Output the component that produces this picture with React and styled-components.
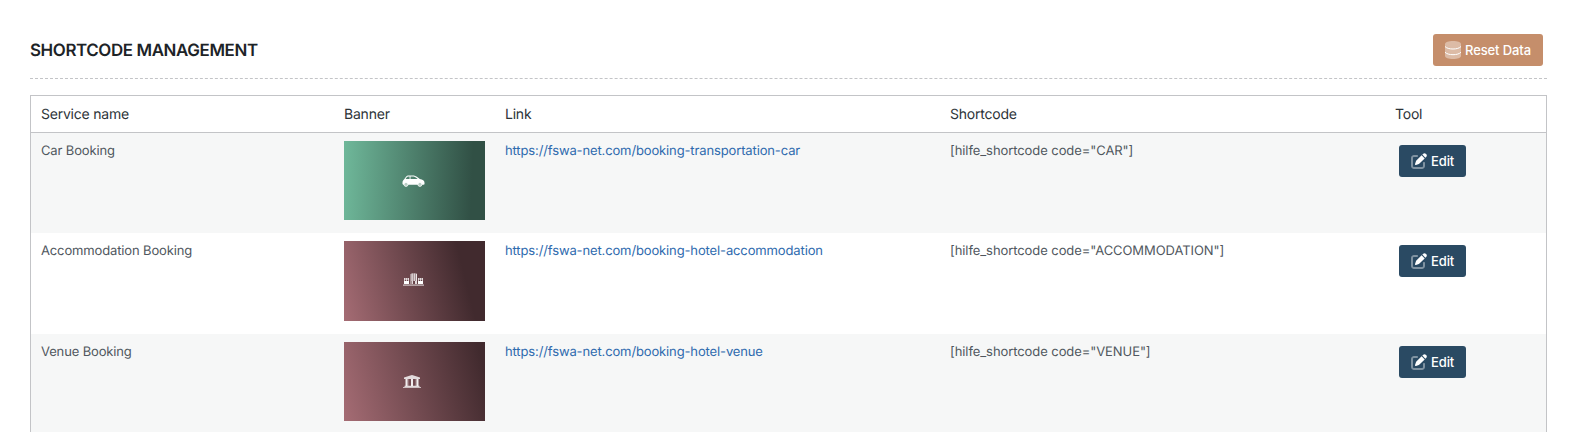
import React from 'react';
import styled, { createGlobalStyle } from 'styled-components';

const GlobalStyle = createGlobalStyle`
  * { box-sizing: border-box; }
  html { overflow: hidden; }
  body {
    margin: 0;
    background: #fff;
    color: #50575e;
    font: 13px/18px Inter, "Liberation Sans", sans-serif;
    text-rendering: geometricPrecision;
  }
`;

const Page = styled.main`
  height: 432px;
  overflow: hidden;
  padding: 21px 28px 0 30px;
`;

const Header = styled.header`
  display: flex;
  align-items: center;
  justify-content: space-between;
  height: 58px;
  padding: 0 4px 0 0;
  border-bottom: 1px dashed #c3c4c7;
`;

const Title = styled.h1`
  margin: 0;
  padding-top: 2px;
  color: #1d2327;
  font-size: 16.9px;
  font-weight: 600;
  line-height: 24px;
  letter-spacing: -0.38px;
  white-space: nowrap;
`;

const Button = styled.button`
  display: inline-flex;
  align-items: center;
  gap: 4px;
  width: ${(p) => (p.$tone === 'reset' ? 110 : 67)}px;
  height: 32px;
  padding: 0 0 0 12px;
  border: 0;
  border-radius: 3px;
  background: ${(p) => (p.$tone === 'reset' ? '#c58e6b' : '#2a4a63')};
  color: #fff;
  font: 500 13px/18px Inter, "Liberation Sans", sans-serif;
  letter-spacing: -0.1px;
  white-space: nowrap;
`;

const Table = styled.table`
  width: 1517px;
  margin-top: 16px;
  table-layout: fixed;
  border: 1px solid #c3c4c7;
  border-spacing: 0;
`;

const Col = styled.col`
  width: ${(p) => p.$width}px;
`;

const HeadCell = styled.th`
  height: 37px;
  padding: 2px 10px 0;
  border-bottom: 1px solid #c3c4c7;
  color: #2c3338;
  font-size: 14px;
  font-weight: 400;
  letter-spacing: -0.22px;
  text-align: left;
`;

const Row = styled.tr`
  height: ${(p) => p.$height}px;
  background: ${(p) => (p.$striped ? '#f6f7f7' : '#fff')};
`;

const Cell = styled.td`
  padding: 8px 10px;
  vertical-align: top;
  white-space: nowrap;
`;

const TextCell = styled(Cell)`
  padding-top: 9px;
  letter-spacing: ${(p) => p.$tracking}px;
`;

const ToolCell = styled(Cell)`
  padding: 12px 14px;
`;

const Link = styled.a`
  color: #2e6aae;
  text-decoration: none;
`;

const Banner = styled.div`
  display: flex;
  align-items: center;
  justify-content: center;
  width: 141px;
  height: ${(p) => p.$height}px;
  padding: 0 ${(p) => p.$shift}px ${(p) => p.$lift}px 0;
  background: ${(p) => p.$fill};
`;

const DatabaseIcon = () => (
  <svg width="16" height="18" viewBox="0 0 16 18">
    <path d="M0 3C0 1.3 3.6 0 8 0s8 1.3 8 3v12c0 1.7-3.6 3-8 3s-8-1.3-8-3z" fill="#fff" opacity=".4" />
    <path d="M0 5.5c1.500 1.700 4.500 2.500 8 2.500s6.500-.8 8-2.500M0 11.200c1.500 1.700 4.500 2.500 8 2.500s6.500-.8 8-2.500" fill="none" stroke="#fff" strokeWidth="1" />
  </svg>
);

const EditIcon = () => (
  <svg width="16" height="16" viewBox="0 0 512 512" fill="#fff">
    <path opacity=".4" d="M96 64C43 64 0 107 0 160V416c0 53 43 96 96 96H352c53 0 96-43 96-96V320c0-17.700-14.300-32-32-32s-32 14.300-32 32v96c0 17.700-14.300 32-32 32H96c-17.700 0-32-14.300-32-32V160c0-17.700 14.300-32 32-32h96c17.700 0 32-14.300 32-32s-14.300-32-32-32H96z" />
    <path d="M471.6 21.7c-21.9-21.9-57.3-21.9-79.2 0L362.3 51.7l97.9 97.9 30.1-30.1c21.9-21.9 21.9-57.3 0-79.200L471.600 21.700zm-299.200 220c-6.100 6.100-10.800 13.600-13.500 21.900l-29.600 88.800c-2.900 8.600-.6 18.100 5.800 24.600s15.900 8.700 24.600 5.800l88.800-29.600c8.200-2.700 15.700-7.400 21.900-13.500L437.700 172.300 339.700 74.300 172.400 241.700z" />
  </svg>
);

const CarIcon = () => (
  <svg width="23" height="12" viewBox="0 0 23 12">
    <path fill="#fff" fillRule="evenodd" d="M.5 7.500C.5 6 1.200 5 2.200 4.200L4 1.700C4.600.8 5.500.5 7 .5h3.500c2 0 3.500.6 5 1.800L17.800 4c2.800.4 4.700 1.500 4.700 3.700v1.500l-1 .6H1.200L.5 9zM3.600 4h4V1.400H6.500c-.9 0-1.400.3-1.700.8zM8.500 4h7.200l-1.500-1.200c-1.200-.9-2.300-1.400-3.700-1.400h-2z" />
    <g fill="#b7ccc3" stroke="#fff" strokeWidth=".8">
      <circle cx="4" cy="9.400" r="2" />
      <circle cx="17.900" cy="9.400" r="2" />
    </g>
  </svg>
);

const HotelIcon = () => (
  <svg width="21" height="13" viewBox="0 0 21 13">
    <path fill="#fff" opacity=".65" d="M1 5h1v3H1zM3 5h1v3H3zM5 5h1v3H5zM15 5h1v3h-1zM17 5h1v3h-1zM19 5h1v3h-1z" />
    <path fill="#fff" opacity=".45" d="M1 5h5v2H1zM15 5h5v2h-5z" />
    <path fill="#fff" d="M1 8h5v3H1zM15 8h5v3h-5z" />
    <path fill="#fff" opacity=".8" d="M7.500 1h1v10h-1zM9.300.5h.9V8h-.9zM11.200.5h.9V8h-.9zM13 1h1v10h-1zM9 8h1v3H9zM12 8h1v3h-1z" />
    <path fill="#fff" opacity=".35" d="M8 .2h6V8H8z" />
    <path fill="#fff" opacity=".7" d="M0 11.500h21v1.200H0z" />
  </svg>
);

const VenueIcon = () => (
  <svg width="18" height="13" viewBox="0 0 18 13" fill="#fff">
    <path opacity=".8" d="M1 2.500 6.500.8 9 0l2.500.8L17 2.500V4H1zM1.500 10.800h15V12h-15z" />
    <path opacity=".9" d="M2.500 4h2v7h-2zM8 4h2v7H8zM13.500 4h2v7h-2z" />
    <path opacity=".4" d="M4.500 4h1v7h-1zM12.500 4h1v7h-1z" />
    <path opacity=".65" d="M0 12h18v1H0z" />
  </svg>
);

const SERVICES = [
  {
    name: 'Car Booking', link: 'https://fswa-net.com/booking-transportation-car', code: 'CAR',
    Icon: CarIcon, rowHeight: 100, bannerHeight: 79, shift: 2, lift: 0,
    fill: 'linear-gradient(92deg, #6fb89a 0%, #315045 90%)',
  },
  {
    name: 'Accommodation Booking', link: 'https://fswa-net.com/booking-hotel-accommodation', code: 'ACCOMMODATION',
    Icon: HotelIcon, rowHeight: 101, bannerHeight: 80, shift: 2, lift: 3,
    fill: 'linear-gradient(76deg, #a56c74 0%, #412a2e 82%)',
  },
  {
    name: 'Venue Booking', link: 'https://fswa-net.com/booking-hotel-venue', code: 'VENUE',
    Icon: VenueIcon, rowHeight: 100, bannerHeight: 79, shift: 5, lift: 0,
    fill: 'linear-gradient(75deg, #a56c74 0%, #412a2e 95%)',
  },
];

export default function App() {
  return (
    <Page>
      <GlobalStyle />
      <Header>
        <Title>SHORTCODE MANAGEMENT</Title>
        <Button $tone="reset"><DatabaseIcon />Reset Data</Button>
      </Header>
      <Table>
        <colgroup>
          <Col $width={303} />
          <Col $width={161} />
          <Col $width={445} />
          <Col $width={445} />
          <Col $width={161} />
        </colgroup>
        <thead>
          <tr>
            {['Service name', 'Banner', 'Link', 'Shortcode', 'Tool'].map((label) => (
              <HeadCell key={label}>{label}</HeadCell>
            ))}
          </tr>
        </thead>
        <tbody>
          {SERVICES.map(({ name, link, code, Icon, rowHeight, bannerHeight, shift, lift, fill }, i) => (
            <Row key={name} $height={rowHeight} $striped={i % 2 === 0}>
              <TextCell $tracking={-0.14}>{name}</TextCell>
              <Cell>
                <Banner $height={bannerHeight} $shift={shift} $lift={lift} $fill={fill}><Icon /></Banner>
              </Cell>
              <TextCell $tracking={-0.13}><Link href={link}>{link}</Link></TextCell>
              <TextCell $tracking={-0.08}>{`[hilfe_shortcode code="${code}"]`}</TextCell>
              <ToolCell><Button $tone="edit"><EditIcon />Edit</Button></ToolCell>
            </Row>
          ))}
        </tbody>
      </Table>
    </Page>
  );
}
